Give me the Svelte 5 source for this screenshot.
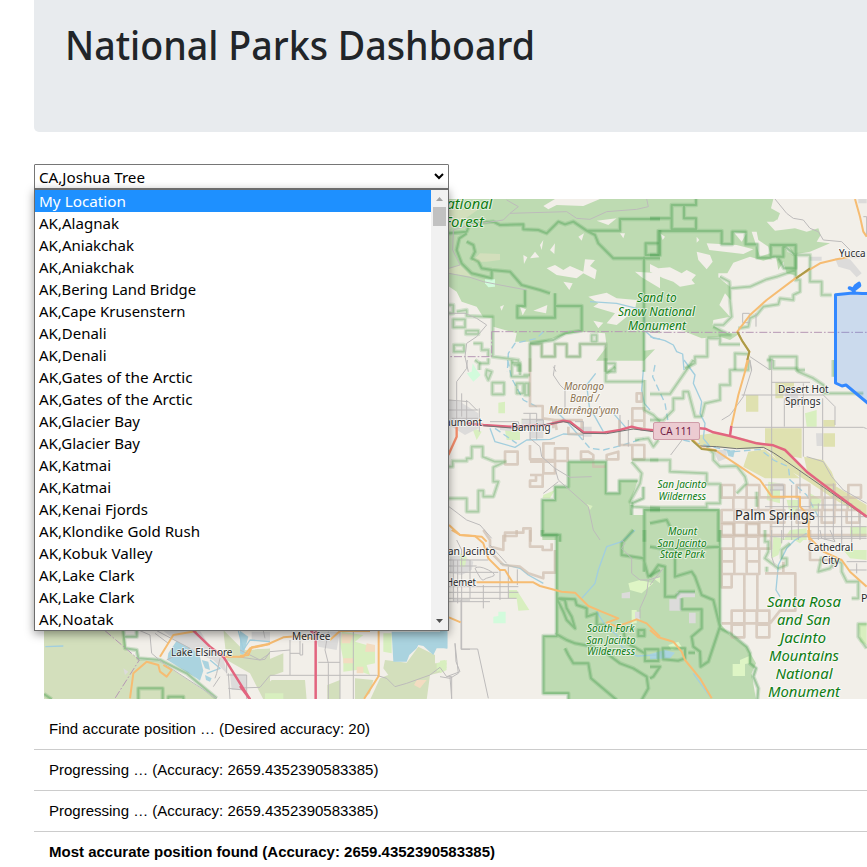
<script>
  const parks = [
    ['My Location', 87], ['AK,Alagnak', 80], ['AK,Aniakchak', 95], ['AK,Aniakchak', 95],
    ['AK,Bering Land Bridge', 157], ['AK,Cape Krusenstern', 146.5], ['AK,Denali', 67.5], ['AK,Denali', 67.5],
    ['AK,Gates of the Arctic', 153.5], ['AK,Gates of the Arctic', 153.5], ['AK,Glacier Bay', 101], ['AK,Glacier Bay', 101],
    ['AK,Katmai', 72], ['AK,Katmai', 72], ['AK,Kenai Fjords', 109], ['AK,Klondike Gold Rush', 161],
    ['AK,Kobuk Valley', 113.5], ['AK,Lake Clark', 95.5], ['AK,Lake Clark', 95.5], ['AK,Noatak', 74.5]
  ];
  const messages = [
    'Find accurate position … (Desired accuracy: 20)',
    'Progressing … (Accuracy: 2659.4352390583385)',
    'Progressing … (Accuracy: 2659.4352390583385)',
    'Most accurate position found (Accuracy: 2659.4352390583385)'
  ];

  // Map tiles; paths inside a tile use thirds of a pixel.
  const tile = { A: [440, 190], B: [650, 190], C: [440, 360], D: [650, 360], E: [440, 530], F: [650, 530], G: [30, 600], H: [240, 600] };
  const sq = (x, y, w = 38, h = 38) => `M${x} ${y}h${w}v${h}h${-w}z`;

  const shapes = [
    // woodland
    ['A', 'wood', 'M0 27H660V430L612 425V482L645 478L612 512H468L500 470L495 430L425 425L380 432L310 455L225 455L230 430L160 410V385L130 382L110 350L65 335L50 305L20 285Z'],
    ['B', 'wood', 'M-20 27H370L363 55L390 70L380 95L350 95L375 122L435 115L470 125L505 115L512 135L500 155L540 160L480 185L440 192V258L410 250L400 215L385 240L378 200L340 212L300 200L250 218L232 250L205 250L205 262L240 290L242 330L225 310L208 345L240 380L190 390L188 405L225 430L270 430L240 450L210 440L155 445L80 415L0 405L-20 410Z'],
    ['C', 'wood', 'M385 305H498V400H538V362H593L570 430L575 465H660V540H307V420H345V380H385Z'],
    ['D', 'wood', 'M-20 448H210V545H-20Z'],
    ['E', 'wood', 'M307 -5H665V510H385V492H310V318H348V18H307Z'],
    ['F', 'wood', 'M-20 -5H210V280L240 315L290 350L318 400L305 430L318 510H-20Z'],
    ['G', 'scrub', 'M42 90H280L290 150L330 180L390 185L560 295V300H42Z M580 90L640 150L720 145V300H660L585 180Z'],
    ['H', 'scrub', 'M0 190L70 185L130 160V215L75 235L60 265L0 265Z M30 300L95 240L195 240L200 300Z M262 255L300 240V300H262Z M345 235L400 240L390 280L365 300H345Z M435 180L500 188L535 140L585 165V190L620 190L610 215L570 225L560 300H390L420 235L445 225L430 205Z'],
    ['A', 'scrub', 'M95 215L120 190L180 192L180 210L140 215Z M27 235L60 225L95 260L65 255L27 250Z M27 27L60 60L120 55L27 120Z'],
    ['H', 'meadow', 'M305 95L370 105L345 125L380 135L405 150V190L380 195L390 225L350 210L310 215V180L300 130Z M430 100H455V160L430 155Z M590 190L620 180V205L590 215Z M75 280H130V298H75Z'],
    ['H', 'tan', 'M305 100L340 105L330 130L305 130Z M380 130L405 135V155H375Z M310 175H340V190H310Z M350 200H370V220H350Z M530 240L560 240L540 265L522 255Z'],
    // bare ground inside the woodland
    ['A', 'land', 'M345 27H480L430 48L350 45L325 58L310 48Z M320 235L345 225L370 240L390 228L430 245L435 208L465 210L450 228L470 240L465 268L430 250L410 265L350 255Z M370 275L398 280L388 300Z M270 205L285 185L298 202Z M300 165L310 150L305 180Z M330 180L345 160L343 192Z M415 140L432 130L425 152Z M250 195L262 202L252 222Z M585 245L660 250V295L605 262Z M445 320L500 308L530 325L590 330L585 360L530 405L500 400L525 370L460 350L475 340Z M460 392L490 398L475 415Z M240 350L258 358L248 376Z M280 362L322 345L318 370Z M180 350L192 345L185 362Z M470 92L530 85L505 105Z M540 130L555 130L550 145Z'],
    ['B', 'land', 'M170 160L260 165L310 178L280 192L178 180Z M140 185L180 195L188 215L170 238L145 210Z M305 125L320 125L325 150L355 170L360 190L330 200Z M0 222L25 235L60 232L95 250L110 240L138 255L125 270L135 282L90 290L70 275L40 265L0 245Z M250 125L290 130L275 155Z M365 100L382 88V120Z M140 140L148 150L140 158Z M405 170L418 172L430 195L412 185Z M30 130L45 140L38 150Z'],
    ['E', 'pale', 'M565 160L600 150L640 160L605 190L570 180Z M640 145L660 140V160Z M575 240H590V280H575Z'],
    ['F', 'pale', 'M248 402H270V390L298 378V400L285 402V438H248Z M55 345L85 335L95 350L65 360Z'],
    ['F', 'urban', 'M80 186H135V202H95V242H58V208H80Z M117 248H137V280H117Z'],
    ['E', 'urban', 'M30 80L60 75L100 95L95 120L65 135L30 130Z M545 190L570 185V205H545Z M585 245H600V270H585Z'],
    ['D', 'heath', 'M150 225L200 218L280 235L355 255L400 265L465 330L560 380L650 435V470L565 425L475 365L400 320L350 265L280 268L150 258L145 240Z M295 275L345 268L370 290L450 355L345 355L280 320Z M462 290L520 300L545 335L560 375L540 390L475 350Z M345 205H455V295L400 285L345 250Z M288 105H325V155H288Z M376 67H432V98H400V115H376Z M520 180H555V200H520Z M520 220H555V260H520Z'],
    ['C', 'meadow', 'M175 128L195 125V160H175Z M245 175L260 190L245 210Z M95 200L125 215L110 240Z M310 405L345 390L330 415H308Z M440 432L458 438L450 450Z M195 210H240V240H200Z'],
    ['C', 'mint', 'M80 40L95 35L98 10L110 30L122 45L100 65Z'],
    ['A', 'mint', 'M135 268H165V290L145 292L135 280Z'],
    ['E', 'mint', 'M160 260L175 258V245H197V280H160Z'],
    ['E', 'meadow', 'M205 180H230L268 240L235 242L230 205L205 205Z M0 392L15 390L20 420L0 430Z M60 70L80 80L75 110L60 110Z'],
    ['D', 'meadow', 'M355 365L390 370V430L350 420Z M410 420H445V465H420Z M480 400L515 420L500 460L480 440Z M600 500H650V530H600Z M420 510L470 505V540H400Z M465 160L500 150V200H470Z'],
    ['F', 'meadow', 'M370 20L400 25L385 75L365 85Z M430 0L470 20L450 40L415 20Z M580 60H650V90L600 85Z M625 280H650V345L630 335Z'],
    ['B', 'urban', 'M555 205L600 208L635 250L620 262L600 240L565 230Z M625 27H650V40H625Z M480 200H515V212H480Z M600 180L635 185V205H600Z'],
    ['C', 'urban', 'M27 120L60 125L115 160V205L75 225L27 195Z M415 200H455V230H430Z M245 180H310V235H270V210H245Z M180 195L240 205L230 215L180 210Z'],
    ['D', 'urban', 'M190 270H230V295L205 305Z M498 220H518V258H500Z M370 370H400V390H370Z M400 80L440 85L450 140L410 130Z'],
    ['G', 'land', 'M320 92H580L590 180L660 220L700 298H560L395 185L360 150L365 110Z M630 110L720 100V145L640 150Z'],
    ['G', 'urban', 'M400 92H510L540 140L580 170L590 220L550 180L470 150Z M280 205L295 215L285 225Z M600 220L650 225V270H605Z'],
    ['H', 'urban', 'M35 95H90V128L35 120Z M225 95H300L290 150L235 140Z'],
    // water
    ['G', 'lake', 'M440 122L415 160L412 180L500 235L510 242L520 212L510 170L490 150Z M515 180L535 185L540 210L525 205Z M525 225L545 235L540 245L528 240Z'],
    ['H', 'lake', 'M455 95H622V145H590L580 165L550 138L535 135L530 145L508 165L500 185H460Z M0 92L25 110L10 165L0 160Z'],
    ['E', 'lake', 'M0 300H22V356L0 352Z'],
    ['F', 'lake', 'M0 372L45 360L75 368L60 385L0 388Z'],
    ['D', 'lake', 'M230 272L255 270L250 292L235 288Z'],
    ['A', 'creek', 'M450 335L530 340L590 355L612 380L618 425L640 445L660 447'],
    ['A', 'creek dash', 'M310 425L290 445L225 460L205 490L202 545'],
    ['B', 'creek', 'M0 440L45 452L70 465L80 485L98 492L102 540'],
    ['C', 'creek dash', 'M203 0L215 55L250 120L300 145'],
    ['C', 'creek', 'M150 205L165 245L225 262L260 240L330 238L370 222L430 225 M330 145L350 155L385 190L415 225 M467 40L440 75L448 140L490 215 M610 30L605 90L613 130L630 150 M520 160L560 205'],
    ['C', 'creek dash', 'M165 205L230 250 M415 225L450 265L490 270L550 255L610 235'],
    ['D', 'creek', 'M102 0L135 45L130 70L155 125L150 160L165 190L160 235L180 260'],
    ['D', 'creek dash', 'M15 15L8 50L45 130L55 190 M100 240L250 275L330 268L370 300L415 320L420 360L470 405L510 480'],
    ['E', 'creek', 'M585 0L545 35L500 50L475 120L465 160L425 205 M470 245L495 285L530 315L545 350L590 378L650 375 M180 100L240 115L265 135L310 160'],
    ['F', 'creek', 'M470 10L435 30L410 55L385 105L378 180L390 200 M130 430L180 500'],
    ['G', 'creek', 'M46 140L100 138 M540 180L570 205L530 220 M625 92L640 150L660 120L720 125'],
    // tribal checkerboard
    ['C', 'tribe', `M270 -5V138H308V175L345 180L350 210 M270 255V298H310V340H345V305H270 ${sq(195, 275)} ${sq(345, 265)} M423 275H445L460 285V298H423Z M500 285L535 275V298H500Z M590 100H605V125H590Z M577 145H613V182H577Z M538 180V255H613V298H577V255H538 M577 182V205H613V182 M310 300H345 M270 345H308V380H270V362H288V345 M195 545V518H250V505H272V545 M340 205V180H425V222H385V200 M460 305V320H498 M310 298V250H345`],
    ['E', 'tribe', 'M130 0L150 30L150 50L190 60V18H230V0 M270 0V50H308V60H335V40 M345 60V128H310V145L265 130L240 110L190 105L155 70'],
    ['A', 'tribe faint', 'M270 545V462H305V500H345V462H380V500H420V462H497V545'],
    ['D', 'tribe', [[215, 375], [290, 375], [365, 375], [440, 375], [250, 412], [325, 412], [515, 375], [595, 375], [215, 450], [290, 450], [365, 450], [480, 412], [555, 412], [250, 487], [325, 487], [440, 450], [515, 450], [590, 450]].map(([x, y]) => sq(x, y)).join('') + 'M215 525H650'],
    ['F', 'tribe', [[215, -18], [290, -18], [250, 18], [325, 18], [215, 56], [290, 56], [215, 94], [290, 94], [245, 242], [320, 242], [283, 242], [245, 284], [320, 284]].map(([x, y]) => sq(x, y)).join('') + 'M215 130V172H245V132H283V242 M322 130V242 M345 130H436V242H390L360 280 M480 0V90H550 M215 280H245 M400 95V130'],
    // reserve boundaries
    ['A', 'edge', 'M27 130L80 125L90 100L160 95L180 105L250 103V118L295 120L320 130L355 95L375 103L400 95L440 122L465 135L475 160L520 205L660 205 M440 122H540V87H660 M660 120V195H617V160H660 M612 200V545 M80 130L58 145L50 180L65 220L95 250L155 265V240L210 245L245 285L300 300L330 310 M80 155L100 165L105 185L95 205L115 215L125 235L155 240 M255 300V348H232V383H345V310 M345 348H425V422L375 430L340 450L270 460'],
    ['A', 'thin', 'M27 345H40V370H27 M50 365L80 360V378L130 380H158V500L235 510V545 M40 388H75V412H40Z M78 422H115V432H78Z M42 465H72V485H42Z M100 460H125V480H145V500 M105 510L118 520V540 M270 545V462H305V500H345V462H380V500H420V462H497V545 M215 518H240V545 M455 435H470V455H455Z M497 545H525V520H500'],
    ['B', 'edge', 'M0 85H65V45H138V27 M65 85V118H138V85H102V45 M0 195H25V123H215V163H247V125H287V163H322V203H362V165H437V235H402L385 205 M322 165V200 M362 200H400V165L435 195'],
    ['B', 'thin', 'M437 195H480V275H515V315H545 M437 195V270H450V305L430 315V330L390 325L385 343L340 350L320 375L300 385L295 410L265 415 M437 240L380 260L350 268L300 290L240 295L238 275L210 260 M240 295V330L245 380L220 405H190 M190 410L240 435H210V463H270 M172 445V500H135V520L105 535 M172 445H210 M255 540V490L295 492 M360 540V500H440V540H465'],
    ['C', 'thin', 'M27 320H38V303H80V295H95V260H128V290L165 305H195L160 322V365H175L160 410H130V392H115V455H80V415H27 M118 10H145V-5 M140 30L155 35L145 60L138 45Z M157 68H192V103H157Z M215 0V50H265 M230 70H250V100H230Z M250 45H270 M220 15H240V45 M265 70V105H255V70Z M497 -5V65H613 M500 40L525 20 M577 300H655 M613 60V150L640 165L660 185 M585 240L625 235L640 260L655 240 M575 305L605 340L600 370L570 425L580 440L660 445'],
    ['C', 'edge', 'M385 305H498V400H538V362H593 M385 305V380H345V420H307V525H360V545 M575 465V435 M613 545V450H660 M610 380V415L575 430'],
    ['D', 'thin', 'M0 102H60L130 0 M155 170H135L115 95L100 95V115H70V150L40 180H0 M155 170L165 130L210 120V75H240V30H295V0 M170 260L190 280V300L210 320L260 318L285 350L290 370L260 400 M0 300H60V335L170 340V372H210V430H170V442H0 M370 0V25H440L445 35L490 55L520 75L522 100H640 M320 395V440 M350 0H370 M550 0V50'],
    ['D', 'edge', 'M0 450H205V545 M0 490L50 480L60 500'],
    ['E', 'edge', 'M307 0V15H350V318H310V490H385V510 M350 205L375 210L380 235L395 260L405 295L380 270L370 245L350 205 M350 205L405 208L410 225L440 235V260L470 250V285L500 285 M345 310L380 330L405 340L460 350L500 370L540 400L580 415L620 440L625 475L605 510 M375 355L385 375L400 400L445 400L453 445L530 510 M595 300H613V318H595Z M615 358H655V393H615Z M550 290L555 335L580 350L615 370 M580 0L545 40L545 75L610 85L625 140L660 120 M613 0V125'],
    ['F', 'edge', 'M210 0V290 M0 50L45 58L210 50 M0 140L25 105L45 110V200H75L90 185H135 M95 205V238H155V295L125 320L130 350L150 365L152 410L175 395L200 320L210 290L190 210L155 195L135 140L125 125L75 140V60 M210 295L240 310L290 350L300 370V400L318 415L310 440L325 475L322 510 M38 355H105V385L85 392L40 388Z M115 368H135 M0 410L30 410L10 440L0 445'],
    ['F', 'thin', 'M345 0V35H355V65L345 85L385 115L410 105V85H395V60L420 40 M350 110V125 M515 80L505 125L540 115L560 90L575 100V125L590 155H625V205H605 M650 282H625V320L650 355'],
    ['G', 'edge thick', 'M280 92L285 145L320 150L325 175L390 180L470 220L560 295 M325 298V265H398V298 M415 298V290H460V298 M42 282L65 298 M285 110H320V92'],
    // administrative lines
    ['A', 'admin', 'M155 425H660 M155 425V500H27'],
    ['B', 'admin', 'M0 427H650'],
    ['G', 'admin', 'M225 92L328 180L255 295'],
    // minor roads and streets
    ['A', 'lane', 'M27 250L90 262L130 275L180 285L260 300 M27 235L60 225L38 180L40 120L90 105L190 90L210 70L380 65L410 85L450 88L500 65L590 58L625 50L620 27 M210 70L235 50L200 30 M27 370L75 370L110 385L140 405L110 440L80 460L75 500L85 545 M340 530L348 545'],
    ['B', 'lane', 'M375 27L410 70L430 85L460 90L480 115L505 125L520 150L575 155L600 180 M278 370H298V398H278Z M318 370V410 M300 500L360 540 M295 500L305 540 M640 80L650 80V140'],
    ['C', 'lane', 'M82 0L80 25L50 65V190 M27 120L85 125L110 150 M65 100V170 M80 120V180 M27 150H115 M35 175H115 M118 145V215 M250 160H290V240 M270 160V240 M290 180H310V215 M245 178H310 M150 185H235L240 205 M345 15L340 45L360 75L375 90L375 155 M270 235L300 260L305 290L345 325L355 360L445 440L460 510L480 540 M345 325L390 352L455 350 M355 365L310 400 M27 440L80 480L120 495L155 535 M540 165V260 M565 180V260 M405 185H430V240'],
    ['D', 'lane', 'M62 285L100 235 M365 0V410 M403 115V200 M460 70V290 M365 67H480 M275 105H520L555 140V195 M518 115V300 M248 202H640L650 206 M470 290L520 305L545 350L580 390L650 430 M240 165L215 180 M300 0L305 30L280 110L240 165 M450 330V400 M345 375H400V540 M360 390H400 M345 440H480 M425 375V540 M445 410V540 M505 430V540 M525 385V540 M550 370V540 M575 420V540 M605 430V540 M630 450V540 M360 470H650 M360 500H650 M430 530H650 M480 435H600'],
    ['E', 'lane', 'M27 90H145 M27 108H110 M27 127H175 M65 60V357H113L145 505 M27 155H110 M27 170H235 M27 187H235 M27 205H230 M27 215H150 M40 90V215 M53 90V220 M90 90V205 M130 165V235 M180 120V210 M205 110V205 M232 118V165 M105 115Q115 105 145 120T155 140T130 150T105 115 M45 340L55 430L30 445L0 440 M30 440L35 505 M50 30L65 60 M150 45L200 100 M545 30L555 40L545 55L575 85L575 130L600 150L625 150L660 140 M625 150L620 190L600 235L600 265'],
    ['F', 'lane', 'M0 165L15 145L40 115 M365 0V80L375 110 M395 0V40 M360 20H470 M510 0L515 25L555 35L540 0 M590 95H650 M600 120H650 M620 100V130 M540 90L550 115 M480 25H650 M575 0V60 M605 0V55'],
    ['G', 'lane', 'M380 92L480 145L410 180 M330 92L360 105L365 160L400 190L560 295 M375 100L415 130 M590 180V220 M595 220L600 298 M595 265L640 270 M590 225H650V298 M620 170L690 180L720 160 M570 175L560 220L555 235 M570 230L550 260'],
    ['H', 'lane', 'M0 150L60 180L75 178L90 155L150 150 M150 120V225 M90 226H410 M90 226L60 262L0 264 M300 92V298 M340 95V298 M235 187H300 M265 95L255 150L265 190V298 M180 120V165H188V130 M410 226L440 235L465 260L500 250L570 225L600 202L620 230H635V298 M645 130L648 185L660 215L620 230 M663 0V148H690 M640 0H690 M150 160H180 M70 92L75 115'],
    ['D', 'rail', 'M120 235L150 258L200 260L260 266L340 262L370 278L400 298L475 350L650 472'],
    // main roads
    ['B', 'primary', 'M615 27L630 80L640 125L650 140 M600 200L560 208L510 220L440 262L350 330L300 375L262 425L275 450L298 485L285 540'],
    ['B', 'greenroad', 'M480 235L438 265 M262 425L278 455L298 485L292 510'],
    ['D', 'primary', 'M295 0L265 105L243 205 M125 235L155 265L195 270L270 320L330 360L365 410H450V440L475 465L478 540'],
    ['D', 'greenroad', 'M125 240L155 267L200 272'],
    ['E', 'primary', 'M35 0L60 15L105 18L130 40L145 85L180 120L195 120L218 157 M110 157H280L300 168L365 185L405 188L445 228L485 245L535 265L500 278L530 290L590 268L620 280L660 320 M27 262L62 277'],
    ['F', 'primary', 'M0 300L25 322L70 335L95 365L105 390L150 445L185 505 M475 0V20L520 65L575 90L600 125L650 170'],
    ['G', 'primary', 'M300 295L310 220L350 185L385 195L390 215L410 230L425 210L400 195 M390 170L430 105L500 93 M575 170L640 170L660 145L720 132'],
    ['H', 'primary', 'M0 168L25 165L35 142L85 132L130 112L180 108L225 118 M270 120L300 93H390 M416 92V228L372 297'],
    ['C', 'orange', 'M50 200V230L25 285'],
    ['C', 'primary', 'M27 495L60 525L125 530L140 545'],
    ['C', 'motor', 'M80 190L130 195L210 200L320 195L370 182L390 185L430 217L490 218L540 210L575 200L605 208L660 212'],
    ['D', 'motor', 'M0 212H10 M148 205L165 206L190 217L240 228L320 250L370 256L405 270L470 335L545 392L650 470 M240 228L244 198'],
    ['G', 'motor', 'M490 92L540 140L580 170L660 298'],
    ['H', 'motor', 'M227 92V298 M0 258L30 298 M212 92L225 102'],
    ['C', 'rail', 'M130 197L215 204L330 192L370 185L388 189L430 220L500 221L580 207L640 215']
  ];

  // text, left, right, baseline, size, style
  const labels = [
    ['National', 436, 492.3, 209, 14.5, 'park'], ['Forest', 444, 484, 227, 14.5, 'park'],
    ['Sand to', 636.7, 676.7, 301.6, 12, 'park'], ['Snow National', 618, 695, 316, 12, 'park'], ['Monument', 628, 686, 330, 12, 'park'],
    ['Yucca', 839, 865.5, 256.5, 10.6, 'town'],
    ['Morongo', 564, 604, 389.5, 10.4, 'band'], ['Band /', 570, 599, 401.7, 10.4, 'band'], ["Maarrênga'yam", 549, 619, 413.5, 10.4, 'band'],
    ['Banning', 511.5, 550.5, 431, 10.8, 'town'], ['Beaumont', 433, 482, 426.3, 10.8, 'town'],
    ['Desert Hot', 778, 828.5, 392.7, 10.8, 'town'], ['Springs', 785, 820.5, 405, 10.8, 'town'],
    ['San Jacinto', 657.5, 706.5, 488.3, 10.1, 'park'], ['Wilderness', 658.5, 706, 500, 10.1, 'park'],
    ['Palm Springs', 735, 815, 520, 13.5, 'town'],
    ['Mount', 668, 697, 535, 10.1, 'park'], ['San Jacinto', 657.5, 706.5, 546.5, 10.1, 'park'], ['State Park', 660, 705, 558.3, 10.1, 'park'],
    ['Cathedral', 807.5, 853, 551, 10.8, 'town'], ['City', 821.5, 839.5, 563.8, 10.8, 'town'],
    ['San Jacinto', 442, 495.5, 555.3, 10.8, 'town'], ['Hemet', 446, 476, 586.3, 10.8, 'town'],
    ['South Fork', 587, 634.5, 631.7, 10.1, 'park'], ['San Jacinto', 586.5, 635.5, 643.5, 10.1, 'park'], ['Wilderness', 587, 635, 655.3, 10.1, 'park'],
    ['Santa Rosa', 767, 841, 607, 14.5, 'park'], ['and San', 777, 830.5, 625, 14.5, 'park'], ['Jacinto', 780, 826, 643, 14.5, 'park'],
    ['Mountains', 769, 839, 661, 14.5, 'park'], ['National', 775.5, 832.5, 679, 14.5, 'park'], ['Monument', 768, 840, 696.5, 14.5, 'park'],
    ['Lake Elsinore', 171, 232.5, 655.5, 10.8, 'town'], ['Menifee', 292, 330.5, 639.7, 10.8, 'town']
  ];
</script>

<main>
  <header>
    <h1><svg width="500" height="60"><text x="-1" y="41" textLength="470" lengthAdjust="spacingAndGlyphs">National Parks Dashboard</text></svg></h1>
  </header>

  <div class="picker">
    <div class="select">
      <svg class="line" width="400" height="22"><text x="4" y="18" textLength="106" lengthAdjust="spacingAndGlyphs">CA,Joshua Tree</text></svg>
      <svg class="chev" width="10" height="7" viewBox="0 0 10 7"><path d="M1 1L5 5L9 1" fill="none" stroke="#000" stroke-width="2" /></svg>
    </div>
    <div class="menu">
      <div class="options">
        {#each parks as [name, width], i}
          <div class="option" class:active={i === 0}>
            <svg class="line" width="390" height="22"><text x="4" y="17" textLength={width} lengthAdjust="spacingAndGlyphs">{name}</text></svg>
          </div>
        {/each}
      </div>
      <div class="scroll">
        <svg width="17" height="17" viewBox="0 0 17 17"><path d="M5 11L8.5 7L12 11Z" fill="#a3a3a3" /></svg>
        <div class="thumb"></div>
        <svg width="17" height="17" viewBox="0 0 17 17"><path d="M5 6H12L8.5 10Z" fill="#505050" /></svg>
      </div>
    </div>
  </div>

  <svg class="map" width="823" height="500" viewBox="44 199 823 500">
    <rect x="44" y="199" width="823" height="500" fill="#f2efe9" />
    {#each shapes as [t, kind, d]}
      <g transform="translate({tile[t][0]} {tile[t][1]}) scale(.33333)">
        {#if kind.startsWith('edge') || kind === 'thin'}<path class="{kind} glow" {d} />{/if}
        <path class={kind} {d} />
      </g>
    {/each}
    <path class="joshua" d="M870 293.5H862L853 293L835.5 294.7V383L842 386L846 385L870 405" />
    <path class="blob" d="M849.5 288L852 289L854 291.5M853 290L855.5 286L859 283.5L859.5 285.5L855 289" />
    <rect x="653.5" y="422.5" width="46" height="17" rx="1.5" fill="#eccbd1" stroke="#cf9ca8" />
    <text class="road" x="660" y="435.3" textLength="32" lengthAdjust="spacingAndGlyphs">CA 111</text>
    {#each labels as [text, left, right, y, size, kind]}
      <text class={kind} x={left} {y} font-size={size} textLength={right - left} lengthAdjust="spacingAndGlyphs">{text}</text>
    {/each}
    <text class="town" x="861" y="602.3" font-size="10.8">P</text>
  </svg>

  <div class="log">
    {#each messages as message, i}
      <p class:final={i === 3}>{message}</p>
    {/each}
  </div>
</main>

<style>
  :global(body) { background: #fff; overflow: hidden; }
  main { box-sizing: border-box; width: 867px; height: 867px; padding-left: 34px; overflow: hidden; display: flex; flex-direction: column; }
  header { height: 132px; flex: none; background: #e8ebee; border-bottom-left-radius: 5px; }
  h1 { margin: 0; padding: 19px 0 0 32px; font: 500 40px/54px 'Noto Sans', sans-serif; }
  h1 svg { display: block; fill: #212529; }
  .picker { position: relative; z-index: 1; flex: none; width: 415px; height: 25px; margin-top: 32px; }
  .select { box-sizing: border-box; height: 25px; border: 1px solid #767676; border-radius: 1px; display: flex; justify-content: space-between; align-items: flex-start; background: #fff; }
  .chev { margin: 8px 4px 0 0; flex: none; }
  .line { display: block; font: 15.3px 'Noto Sans', sans-serif; fill: #000; }
  .menu { position: absolute; top: 24px; left: 0; box-sizing: border-box; width: 415px; height: 443px; border: 1px solid #6c6c6c; border-top-width: 2px; background: #fff; display: flex; box-shadow: 0 3px 9px rgba(0, 0, 0, .4); }
  .options { flex: 1; }
  .option { height: 22px; }
  .active { background: #1e90ff; }
  .active .line { fill: #fff; }
  .scroll { width: 17px; background: #f1f1f1; display: flex; flex-direction: column; }
  .scroll svg { display: block; }
  .thumb { width: 13px; height: 19px; margin: 0 2px auto; background: #c1c1c1; }
  .map { display: block; flex: none; margin: 10px 0 0 10px; }
  .map path { fill: none; stroke-linejoin: round; }
  .map .wood { fill: #bedbb2; }
  .map .scrub { fill: #d3dfbc; }
  .map .meadow { fill: #d8efbf; }
  .map .tan { fill: #f3dcc1; }
  .map .land { fill: #f2efe9; }
  .map .pale { fill: #def5c5; }
  .map .mint { fill: #d2fbdc; }
  .map .urban { fill: #dcdbda; }
  .map .heath { fill: #dfe1b0; }
  .map .lake { fill: #aad3df; }
  .map .creek { stroke: #a2cede; stroke-width: 4; }
  .map .dash { stroke-dasharray: 20 11; }
  .map .tribe { stroke: #cfbdae; stroke-opacity: .7; stroke-width: 8; }
  .map .faint { stroke-opacity: .35; }
  .map .edge { stroke: #55a65a; stroke-opacity: .4; stroke-width: 6; }
  .map .thin { stroke: #65ad65; stroke-opacity: .36; stroke-width: 5; }
  .map .glow { stroke-opacity: .22; stroke-width: 13; }
  .map .admin { stroke: #b697b5; stroke-width: 3; stroke-dasharray: 24 6 5 6; }
  .map .lane { stroke: #bdbbbb; stroke-width: 3; }
  .map .rail { stroke: #737373; stroke-width: 3; }
  .map .primary { stroke: #f6bc72; stroke-width: 6; }
  .map .greenroad { stroke: #ab9b48; stroke-width: 6; }
  .map .orange { stroke: #f28c6b; stroke-width: 7; }
  .map .motor { stroke: #e2657f; stroke-width: 7.5; }
  .map .joshua { fill: rgba(51, 136, 255, .2); stroke: #38f; stroke-width: 3; }
  .map .blob { stroke: #38f; stroke-width: 3.6; stroke-linecap: round; }
  .map text { font-family: 'Noto Sans', sans-serif; paint-order: stroke; stroke: rgba(255, 255, 255, .6); stroke-width: 2px; stroke-linejoin: round; }
  .map .park { fill: #0f7d14; font-style: italic; }
  .map .town { fill: #2b2b2b; }
  .map .band { fill: #8b7250; font-style: italic; }
  .map .road { fill: #6d1740; stroke: none; font-size: 10.6px; }
  .log { flex: none; margin-top: 10px; }
  p { box-sizing: border-box; height: 41px; margin: 0; padding: 0 15px; border-bottom: 1px solid #ccc; font: 15px/40px 'Liberation Sans', Arial, sans-serif; color: #000; white-space: nowrap; }
  .final { font-weight: 700; }
</style>
